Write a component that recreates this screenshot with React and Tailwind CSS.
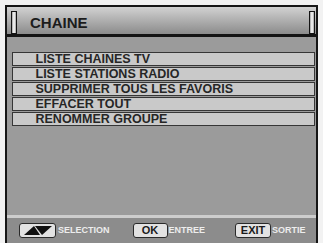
import React from "react";

function Bar() {
  return (
    <div className="w-[6px] h-[23px] self-end border-[1.5px] border-[#141414] bg-[#b8b8b8] flex justify-center">
      <div className="w-[1.5px] h-full bg-[#e8e8e8]" />
    </div>
  );
}

function Item({ children }) {
  return (
    <div className="h-[14px] border-[1.5px] border-[#363636] bg-[#c9c9c9] flex items-center pl-[22.5px] text-[12.5px] font-bold text-[#262626] leading-none">
      {children}
    </div>
  );
}

function Btn({ w, children }) {
  return (
    <div
      className="h-[15px] border border-[#2a2a2a] rounded-[3px] bg-[#e2e2e2] flex items-center justify-center text-[11px] font-bold text-[#1a1a1a] leading-none"
      style={{ width: w }}
    >
      {children}
    </div>
  );
}

function Label({ children }) {
  return (
    <span className="text-[9px] font-bold text-[#ededed] leading-none">{children}</span>
  );
}

export default function App() {
  return (
    <div
      className="w-[323px] h-[243px] bg-[#f2f2f2] pt-[5px] pl-[5px] overflow-hidden"
      style={{ fontFamily: '"Liberation Sans", Arial, sans-serif' }}
    >
      <div className="w-[313px] h-[238px] border-2 border-b-0 border-[#161616] flex flex-col">
        <div className="h-[30px] shrink-0 border-b-[3px] border-[#141414] bg-gradient-to-b from-[#d2d2d2] to-[#8c8c8c] flex items-stretch pl-[4px] pr-[1px]">
          <Bar />
          <div className="flex-1 flex items-center pl-[13px] pt-[4px] text-[15px] font-bold text-[#1c1c1c] leading-none">
            CHAINE
          </div>
          <Bar />
        </div>
        <div className="flex-1 bg-[#9b9b9b] pt-[15px] pl-[5px] pr-[1px] flex flex-col gap-[1px]">
          <Item>LISTE CHAINES TV</Item>
          <Item>LISTE STATIONS RADIO</Item>
          <Item>SUPPRIMER TOUS LES FAVORIS</Item>
          <Item>EFFACER TOUT</Item>
          <Item>RENOMMER GROUPE</Item>
        </div>
        <div className="h-[3px] shrink-0 bg-[#cdcdcd]" />
        <div className="h-[25px] shrink-0 bg-[#8c8c8c] pt-[5px] pl-[12px] flex items-start">
          <div className="flex items-center gap-[2px]">
            <Btn w={37}>
              <svg width="30" height="11" viewBox="0 0 30 11">
                <polygon points="1,10 11,1 17,10" fill="#111" />
                <polygon points="12,1 29,1 19,10" fill="#111" />
              </svg>
            </Btn>
            <Label>SELECTION</Label>
          </div>
          <div className="flex items-center gap-[1px] ml-[23px]">
            <Btn w={35}>OK</Btn>
            <Label>ENTREE</Label>
          </div>
          <div className="flex items-center gap-[1px] ml-[30px]">
            <Btn w={36}>EXIT</Btn>
            <Label>SORTIE</Label>
          </div>
        </div>
      </div>
    </div>
  );
}
